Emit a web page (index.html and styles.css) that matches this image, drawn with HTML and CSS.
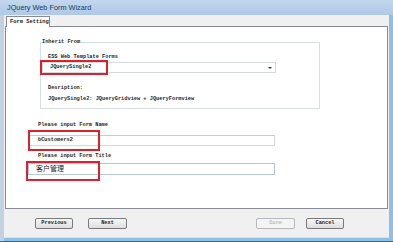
FILE: index.html
```html
<!DOCTYPE html>
<html>
<head>
<meta charset="utf-8">
<link rel="stylesheet" href="styles.css">
</head>
<body>
<div class="window">
  <div class="titlebar">JQuery Web Form Wizard</div>
  <div class="client">
    <div class="tabs"><div class="tab">Form Setting</div></div>
    <div class="panel">
      <fieldset class="group">
        <legend class="legend">Inherit From</legend>
        <div class="lbl lbl-ess">ESS Web Template Forms</div>
        <div class="select"><span class="sel-text">JQuerySingle2</span><span class="arrow"></span></div>
        <div class="lbl lbl-desc">Desription:</div>
        <div class="lbl lbl-line">JQuerySingle2: JQueryGridview + JQueryFormview</div>
      </fieldset>
      <div class="lbl lbl-name">Please input Form Name</div>
      <div class="input input-name">bCustomers2</div>
      <div class="lbl lbl-title">Please input Form Title</div>
      <div class="input input-title">客户管理</div>
      <div class="mark mark-1"></div>
      <div class="mark mark-2"></div>
      <div class="mark mark-3"></div>
    </div>
    <div class="buttons">
      <div class="btn btn-prev">Previous</div>
      <div class="btn btn-next">Next</div>
      <div class="spacer"></div>
      <div class="btn btn-done">Done</div>
      <div class="btn btn-cancel">Cancel</div>
    </div>
  </div>
</div>
</body>
</html>
```
FILE: styles.css
```css
html, body {
  margin: 0;
  padding: 0;
  background: #ffffff;
}
.window {
  width: 393px;
  height: 242px;
  display: flex;
  flex-direction: column;
  background: linear-gradient(to right, #c3d2e2 0, #c3d2e2 4px, #8fbfe4 4px);
  box-sizing: border-box;
  border-bottom: 1px solid #2f6f8c;
  overflow: hidden;
}
.titlebar {
  height: 15px;
  flex: none;
  background: linear-gradient(to bottom, #c3d7ef, #aec8e6);
  font-family: "Liberation Sans", Arial, sans-serif;
  font-size: 7.3px;
  line-height: 15px;
  color: #1f3a5a;
  padding-left: 7px;
}
.client {
  flex: 1;
  margin: 0 4px 3px 4px;
  background: #f0f0f0;
  display: flex;
  flex-direction: column;
  border-bottom: 1px solid #d6e3ef;
}
.tabs {
  height: 11px;
  flex: none;
  display: flex;
  padding-left: 2px;
  position: relative;
  z-index: 1;
}
.tab {
  width: 44px;
  height: 11px;
  box-sizing: border-box;
  border: 1px solid #898c95;
  border-bottom: none;
  background: #ffffff;
  font-family: "Liberation Mono", monospace;
  font-weight: bold;
  font-size: 5.4px;
  line-height: 10px;
  color: #222;
  padding-left: 3px;
  margin-top: 1px;
}
.panel {
  position: relative;
  height: 183px;
  flex: none;
  box-sizing: border-box;
  margin: 0 1px 0 1px;
  border: 1px solid #898c95;
  background: #ffffff;
}
.lbl, .legend, .sel-text, .input, .btn {
  font-family: "Liberation Mono", "Noto Sans CJK SC", monospace;
  font-weight: bold;
  font-size: 5.3px;
  line-height: 7px;
  color: #262626;
}
.group {
  margin: 12px 0 0 34px;
  width: 280px;
  box-sizing: border-box;
  border: 1px solid #d8dee4;
  padding: 0 0 5px 7px;
}
.legend {
  padding: 0;
  margin-left: -6px;
  background: #fff;
}
.lbl-ess {
  margin-top: 8px;
}
.select {
  margin: 1px 0 0 -6px;
  width: 234px;
  height: 11px;
  box-sizing: border-box;
  border: 1px solid #d4d9de;
  display: flex;
  align-items: center;
  justify-content: space-between;
  padding: 0 3px 0 7px;
}
.arrow {
  width: 0;
  height: 0;
  border-left: 2px solid transparent;
  border-right: 2px solid transparent;
  border-top: 2px solid #333;
}
.lbl-desc {
  margin-top: 12px;
}
.lbl-line {
  margin-top: 4px;
}
.lbl-name {
  margin: 13px 0 0 32px;
}
.input {
  margin-left: 22px;
  width: 247px;
  box-sizing: border-box;
  border: 1px solid #d2d9e0;
  border-top-color: #c4ccd4;
  padding-left: 9px;
}
.input-name {
  margin-top: 6px;
  height: 11px;
  line-height: 9px;
}
.lbl-title {
  margin: 7px 0 0 32px;
}
.input-title {
  margin-top: 3px;
  height: 12px;
  line-height: 10px;
  font-size: 7px;
  font-weight: normal;
  padding-left: 7px;
  border-color: #b8c8d8;
}
.mark {
  position: absolute;
  box-sizing: border-box;
  border: 2px solid #d8222e;
}
.mark-1 { left: 34px; top: 33px; width: 68px; height: 15px; }
.mark-2 { left: 22px; top: 103px; width: 72px; height: 21px; }
.mark-3 { left: 20px; top: 134px; width: 74px; height: 20px; }
.buttons {
  display: flex;
  margin-top: 9px;
  height: 11px;
  padding-left: 31px;
}
.btn {
  height: 11px;
  box-sizing: border-box;
  border: 1px solid #7a7a7a;
  border-radius: 2px;
  background: linear-gradient(to bottom, #f6f6f6, #dedede);
  text-align: center;
  line-height: 9px;
}
.btn-prev { width: 38px; }
.btn-next { width: 39px; margin-left: 15px; }
.spacer { width: 129px; }
.btn-done {
  width: 39px;
  border-color: #b5b9bd;
  background: #f4f4f4;
  color: #a8a8a8;
  font-weight: normal;
}
.btn-cancel { width: 38px; margin-left: 11px; }
```
